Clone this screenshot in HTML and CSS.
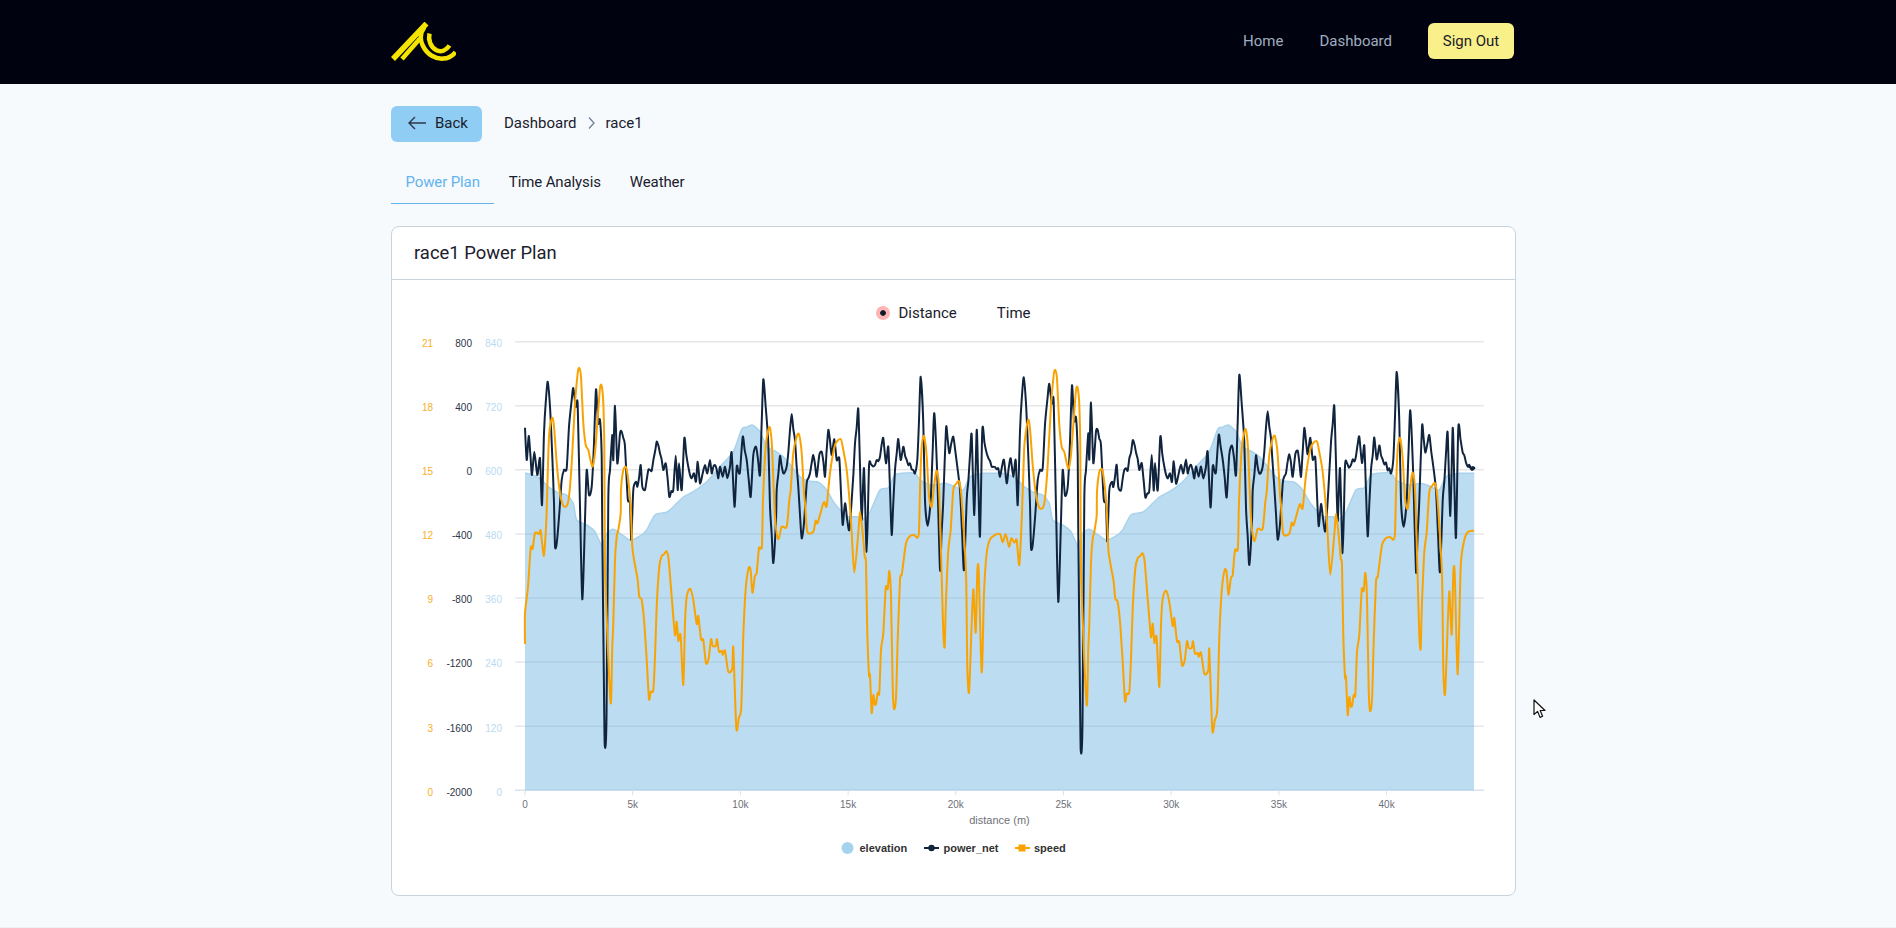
FILE: index.html

```html
<!DOCTYPE html>
<html lang="en">
<head>
  <meta charset="UTF-8">
  <title>race1 Power Plan</title>
  <link rel="stylesheet" href="styles.css">
</head>
<body>
  <header class="topbar">
    <div class="wrap topbar-inner">
      <svg class="logo" viewBox="390 21 66 40" width="66" height="40" fill="none" stroke="#f5e400">
        <path d="M426.5 22.5 L393 58" stroke-width="5.5"/>
        <path d="M420 37.5 L402 58" stroke-width="4.5"/>
        <path d="M424.5 26 C420.5 31 419.5 37 422.5 44 C427 54 436 58 443 57.6 C448 57.3 452.5 55 455.5 51" stroke-width="4.5"/>
        <path d="M429.5 32.5 C428 39 430.5 46 436.5 49.3 C441 51.5 446 49.5 449.5 44.5" stroke-width="4.5"/>
      </svg>
      <nav class="nav">
        <a class="nav-link">Home</a>
        <a class="nav-link">Dashboard</a>
        <button class="signout">Sign Out</button>
      </nav>
    </div>
  </header>

  <main class="wrap">
    <div class="toolbar">
      <button class="back">
        <svg width="18" height="14" viewBox="0 0 18 14" fill="none" stroke="#2d3748" stroke-width="1.4">
          <path d="M18 7 H1 M7 1 L1 7 L7 13"/>
        </svg>
        Back
      </button>
      <div class="crumbs">
        <span>Dashboard</span>
        <svg width="7" height="12" viewBox="0 0 7 12" fill="none" stroke="#718096" stroke-width="1.3">
          <path d="M1 0.5 L6 6 L1 11.5"/>
        </svg>
        <span>race1</span>
      </div>
    </div>

    <div class="tabs">
      <a class="tab tab-active">Power Plan</a>
      <a class="tab">Time Analysis</a>
      <a class="tab">Weather</a>
    </div>

    <section class="card">
      <h2 class="card-title">race1 Power Plan</h2>
      <div class="card-body">
        <div class="axis-switch">
          <span class="radio"></span>
          <span class="radio-label">Distance</span>
          <span class="radio-label">Time</span>
        </div>
        <svg id="chart" class="chart" viewBox="392 330 1122 560" width="1122" height="560"></svg>
      </div>
    </section>
  </main>

  <footer class="foot"></footer>

  <svg class="cursor" width="14" height="20" viewBox="0 0 14 20">
    <path d="M1 1 V15.5 L4.6 12.4 L7 18.4 L9.6 17.3 L7.2 11.5 H12 Z" fill="#fff" stroke="#111" stroke-width="1.2" stroke-linejoin="round"/>
  </svg>

  <script src="chart.js"></script>
</body>
</html>
```

FILE: styles.css

```css
* {
  box-sizing: border-box;
}
html, body {
  margin: 0;
  height: 100%;
}
body {
  display: flex;
  flex-direction: column;
  overflow: hidden;
  font-family: Roboto, "Noto Sans", sans-serif;
  font-size: 15px;
  color: #1a202c;
  background-color: #f6fafd;
}
.wrap {
  width: 1125px;
  margin-left: 391px;
}
.topbar {
  height: 84px;
  flex: none;
  background-color: #00020f;
}
.topbar-inner {
  height: 100%;
  display: flex;
  align-items: center;
  justify-content: space-between;
  padding: 0 2px 2px 0;
}
.logo {
  margin: 2px 0 0 -1px;
}
.nav {
  display: flex;
  align-items: center;
  gap: 36px;
}
.nav-link {
  color: #a0aec0;
  margin-top: -1px;
}
.signout {
  width: 86px;
  height: 36px;
  border: none;
  border-radius: 6px;
  font: inherit;
  color: #1a202c;
  background-color: #faf089;
}
main {
  flex: 1;
}
.toolbar {
  display: flex;
  align-items: center;
  gap: 22px;
  margin-top: 22px;
}
.back {
  display: flex;
  align-items: center;
  gap: 9px;
  width: 91px;
  height: 36px;
  padding: 0 0 2px 17px;
  border: none;
  border-radius: 6px;
  font: inherit;
  color: #1a202c;
  background-color: #90cdf4;
}
.crumbs {
  display: flex;
  align-items: center;
  gap: 11px;
  padding-bottom: 2px;
}
.tabs {
  display: flex;
  margin-top: 18px;
  letter-spacing: -0.12px;
}
.tab {
  padding: 13px 14.5px 0;
  height: 44px;
  line-height: 19px;
}
.tab-active {
  color: #63b3ed;
  border-bottom: 1px solid #63b3ed;
}
.card {
  margin-top: 22px;
  height: 670px;
  border: 1px solid #c9d3dc;
  border-radius: 8px;
  background-color: #fff;
}
.card-title {
  height: 53px;
  margin: 0;
  padding: 0 0 0 22px;
  font-size: 18.4px;
  font-weight: 400;
  line-height: 51px;
  border-bottom: 1px solid #c9d3dc;
}
.axis-switch {
  display: flex;
  align-items: center;
  justify-content: center;
  height: 24px;
  margin-top: 21px;
  gap: 8px;
}
.radio {
  width: 14px;
  height: 14px;
  border-radius: 50%;
  border: 4px solid #ffb3b3;
  background-color: #111827;
  background-clip: content-box;
}
.radio-label + .radio-label {
  margin-left: 32px;
}
.chart {
  display: block;
  margin-top: 5px;
}
.foot {
  height: 1px;
  flex: none;
  background-color: #edf2f7;
}
.cursor {
  position: absolute;
  left: 1533px;
  top: 699px;
}
.tick {
  font-family: "Liberation Sans", Arial, sans-serif;
  font-size: 10px;
}
.axis-name {
  font-family: "Liberation Sans", Arial, sans-serif;
  font-size: 11px;
  fill: #6e7079;
}
.legend-text {
  font-family: "Liberation Sans", Arial, sans-serif;
  font-size: 11px;
  font-weight: bold;
  fill: #333;
}
```

FILE: chart.js

```js
// traced race data, page pixel coordinates. the course is two laps, so lap 2 reuses lap 1
const LAP = 476;
const NAVY = "#10243e";
const ORANGE = "#f9a303";
const PLOT_L = 525, PLOT_R = 1474, PLOT_B = 790.3;

const elevLap = "525,473 533.3,475 541.7,480 548.3,486.7 553.3,490 558.3,492.7 566.7,495 573.3,503.3 576.7,520 586.7,525 595,531.7 601.7,545 606.7,533.3 613.3,529.3 620,533.3 630,540 640,536 646.7,530 655,515 666.7,512.3 673.3,506.7 683.3,497 693.3,491.7 706.7,481.7 720,466.7 733.3,451.7 741.7,429.3 746.7,427.3 752.3,425 760,431.7 766.7,446.7 775,451 783.3,456.7 791.7,466.7 800,476.7 808.3,481 818.3,482.3 826.7,490 833.3,501.7 841.7,511.7 848.3,516.7 856.7,516.7 865,518.3 870,512 880,490 888.3,487.7 895,475 901.7,473.3 915,473.3 920,480 931.7,485 945,483.3 955,486.7 963.3,490 970,476.7 983.3,473.3 998.3,473.3";

const powerHead = "525,427.7 526.7,460 528.7,436 532,475 534.3,451.7 537.3,475 540,458.3 542,505";
const powerLap = "544,433 545.7,403 547.7,381.7 550,406.7 552.3,456.7 554,503 555,546 556.7,543.3 559.3,513.3 561.7,480 564,470 566.7,468.3 569,426.7 571.7,400 573.3,388 575.7,406.7 577.7,405 580,506.7 582.3,599.3 585,520 586.7,470 589,495 591.7,486.7 594,443.3 596,389.3 598,423.3 600,420 601.7,456.7 602.3,533 604.3,718 605,748 606.5,718 608.3,500 610,470 612.3,435 613.3,460 615,405.7 617.3,463.3 620,433.3 621.7,431.7 625,446.7 627.7,498.3 630,503 631.3,540 633.3,490 636,481.7 637.3,486.7 640.7,465 642.3,486.7 645,490 648.3,470 651.7,470.7 656.7,441.7 660,453.3 663.3,470 665.7,463.3 669.3,496.7 673.3,490 675.7,455.7 677.7,490 679,463.3 681.7,490 684.3,438.3 688.3,466.7 691.7,478.3 694,473.3 696,481.7 697.7,461.7 700,483.3 702.7,473.3 705,465 707.3,473.3 710,460 711.7,473.3 715,465 718.3,478.3 720,466.7 722.7,476.7 725,466.7 727.3,478.3 730,466.7 731.7,453 734.5,506.7 736.7,466.7 740,471.7 742.7,436.7 746.7,460 750.7,496.7 753.3,455 756,446.7 760,475 763.3,379.3 765.7,406.7 768.3,443.3 770,506.7 773.3,563 776,520 776.7,490 780,456 783.3,473.3 786.7,466.7 791.7,414 795,440 798.3,486.7 801.7,538.3 804,523 806.7,483.3 810,473.3 813.3,455 816.7,476.7 819.3,455 821.7,451.7 825,476.7 828.3,430 831.7,455 834.3,439.3 836.7,460 839.3,458.3 842.7,525 845,503.3 849.3,530 851.7,500 855,443.3 858.3,409 861.7,520 864,468.3 866.7,551.7 869,466.7 875,465 880,456.7 883.3,438.3 886,463.3 888.3,446.7 891.7,535 895,470 898.3,439 900.7,460 903.3,446.7 906.7,460 915,473.3 917.3,460 920.7,376.7 923.3,423.3 925,500 927.7,525.7 930.7,500 934.3,413.3 937.3,476.7 940,570 943.3,500 946,428.3 949.3,453.3 953.3,436.7 957.3,466.7 960,490 964,570 966.7,500 971.7,435 974.3,515 976.7,430 980,536 982.3,430 986.7,453.3 991.7,466.7 998.3,468.3";
const powerJoin = "1000,476.7 1004,460 1006.7,483.3 1010.7,458.3 1013.3,476.7 1015.7,460 1017.7,505";
const powerTail = "1467.7,466.7 1472,470 1474,468.5";

const speedHead = "525,644 525,613 528,587 530.7,548 532.7,548.7 535,533 539,534 540.7,530.7 543.7,556 545.7,533 546.7,510";
const speedLap = "549,436.7 552.3,417.7 554.3,430 556.7,463 560,493 563.3,505.7 566.7,506 569,496.7 571.7,463 575,403 577.7,373 579.3,368 581,376.7 583.3,423 585.7,445 588.3,450 592.3,466.7 595,453 597.3,423 600,388 601.7,386 603.3,403 604.3,446.7 605,566.7 607.3,633 609.3,680 611,703 612.3,646.7 613.3,623 615,560 616.7,536.7 618.3,530 620.7,513 621,490 623.3,470 626,467.3 628.3,480 630.7,506.7 632.3,546.7 635,565 637.7,580 639.3,596.7 641.7,600 644.3,623 646.7,660 649,699 650.7,691.7 653.3,690 655,656.7 656.7,606.7 659.3,566.7 661.7,556 664,554.3 666.7,551.3 668.7,560 671.7,596.7 675,635 676.7,621.7 678.3,640.7 679.3,636 680.7,636.7 683.3,685 685,623.3 686.7,596.7 690,588.7 693.3,600 696.7,624 698.3,616 701,639.3 703.3,640 706,663.3 708.7,658.3 711,639.3 712.7,646 715.7,646 717,639.3 719,651.7 721.7,650.7 722.7,655 725,650.7 728.3,671.7 732.3,668.3 733.3,647.7 736.3,728 738.8,718 741.3,706.7 743.4,633 745.9,586.7 748.7,568 750.6,570 752.4,592.7 754.9,576 756.7,573 759,548 761.9,546.7 763,500 765.7,446.7 768.3,430 770,428 772,446.7 775,516.7 778.3,539 781.7,526.7 786.7,526.7 789.3,500 790.7,490 793.3,453 796.7,436.7 799,434.3 801.7,453 804,493 805,503 807.3,531.7 813.3,531.7 815.7,520.7 817.7,523 822.7,505 824.3,502 826.7,506 830,473 835,445 840.7,439 843.3,450 846.7,470 850,506.7 851.7,533 854.3,572.7 858.3,533 860,511.7 862.7,533 864.7,556.7 866,563 867.3,633 869,675 870,675 871.7,713 873.3,695 874.7,704 876,704 877.7,693 879.3,692.7 881,650 883.3,633 885.7,588 887.7,589 889.3,571 891,596.7 892.7,686.7 894,709 896,698 897.7,640 900,580 901.7,575 903.3,563 906,543 909.3,536.7 914,535 917.3,537.7 919,531.7 920,490 921.7,446.7 924,436 926.7,456.7 929,496.7 931.7,507 934,486.7 936.7,470.7 939.3,493.3 941.7,576.7 943.3,633 944.7,646.7 946,600 948.3,550 950.7,530 953.3,490 956,484 959.3,481.7 961.7,500 966,573 967.3,666.7 969,692.7 971,643 973.3,589.3 975.7,632.7 977.3,571.7 978.7,571.7 981.7,672.3";
const speedJoin = "984,593 986.7,553 990,539.3 995,535 1000,534 1002.7,542.3 1005.7,534.3 1009,546.7 1011.3,538.3 1014.3,542.7 1016.7,540 1019.3,565 1021.7,520 1024,453";
const speedTail = "1460.7,566.7 1464.3,540 1467.9,532 1474,530.7";

function parse(str) {
  return str.split(" ").map(p => p.split(",").map(Number));
}

function shift(pts, fy) {
  return pts.map(p => [p[0] + LAP, fy(p[1])]);
}

// smooth path through the points, like the chart lib does for smooth series
function smooth(pts) {
  let d = "M" + pts[0][0] + " " + pts[0][1];
  for (let i = 0; i < pts.length - 1; i++) {
    const p0 = pts[Math.max(i - 1, 0)];
    const p1 = pts[i];
    const p2 = pts[i + 1];
    const p3 = pts[Math.min(i + 2, pts.length - 1)];
    const c1x = p1[0] + (p2[0] - p0[0]) / 8;
    const c1y = p1[1] + (p2[1] - p0[1]) / 8;
    const c2x = p2[0] - (p3[0] - p1[0]) / 8;
    const c2y = p2[1] - (p3[1] - p1[1]) / 8;
    d += " C" + c1x.toFixed(1) + " " + c1y.toFixed(1) + " " + c2x.toFixed(1) + " " + c2y.toFixed(1) + " " + p2[0].toFixed(1) + " " + p2[1].toFixed(1);
  }
  return d;
}

// the power reading is noisy between the traced points
function roughen(pts) {
  const out = [];
  pts.forEach((p, i) => {
    out.push(p);
    const next = pts[i + 1];
    if (!next) return;
    const steps = Math.floor((next[0] - p[0]) / 1.6);
    for (let s = 1; s < steps; s++) {
      const t = s / steps;
      const wob = Math.sin(i * 12.9 + s * 78.2) * 2.6;
      out.push([p[0] + (next[0] - p[0]) * t, p[1] + (next[1] - p[1]) * t + wob]);
    }
  });
  return out;
}

const elevation = [...parse(elevLap), ...shift(parse(elevLap), y => y)];
const power = roughen([
  ...parse(powerHead), ...parse(powerLap), ...parse(powerJoin),
  ...shift(parse(powerLap), y => y < 470 ? y - (470 - y) * 0.05 : y + (y - 470) * 0.02),
  ...parse(powerTail)
]);
const speed = [
  ...parse(speedHead), ...parse(speedLap), ...parse(speedJoin),
  ...shift(parse(speedLap), y => y + 2),
  ...parse(speedTail)
];

const NS = "http://www.w3.org/2000/svg";
const chart = document.getElementById("chart");

function add(tag, attrs, text) {
  const el = document.createElementNS(NS, tag);
  for (const k in attrs) el.setAttribute(k, attrs[k]);
  if (text !== undefined) el.textContent = text;
  chart.appendChild(el);
  return el;
}

// grid and y axes
const yAxes = [
  { x: 433, color: "#f9ad2a", vals: [0, 3, 6, 9, 12, 15, 18, 21] },
  { x: 472, color: "#2b3648", vals: [-2000, -1600, -1200, -800, -400, 0, 400, 800] },
  { x: 502, color: "#b7dbf1", vals: [0, 120, 240, 360, 480, 600, 720, 840] }
];
for (let i = 0; i < 8; i++) {
  const y = PLOT_B - i * 64.09;
  add("line", {
    x1: 515, x2: 1484, y1: y, y2: y,
    stroke: i === 0 ? "#d9e2ee" : "#e6e7e8",
    "stroke-width": 1.5
  });
  yAxes.forEach(a => {
    add("text", { class: "tick", x: a.x, y: y + 5.3, "text-anchor": "end", fill: a.color }, a.vals[i]);
  });
}

// elevation area, see-through so the grid shows faintly
add("path", {
  d: smooth(elevation) + " L" + PLOT_R + " " + PLOT_B + " L" + PLOT_L + " " + PLOT_B + " Z",
  fill: "rgba(100,175,222,0.43)",
  stroke: "none"
});
add("path", { d: smooth(elevation), fill: "none", stroke: "#a9d3ec", "stroke-width": 1.5 });

// x axis
for (let k = 0; k <= 40; k += 5) {
  const x = PLOT_L + k * 21.54;
  add("line", { x1: x, x2: x, y1: PLOT_B, y2: PLOT_B + 5, stroke: "#d9e2ee", "stroke-width": 1 });
  add("text", { class: "tick", x: x, y: 807.5, "text-anchor": "middle", fill: "#6e7079" }, k === 0 ? "0" : k + "k");
}
add("text", { class: "axis-name", x: 999.5, y: 824, "text-anchor": "middle" }, "distance (m)");

// series
add("path", { d: smooth(power), fill: "none", stroke: NAVY, "stroke-width": 2, "stroke-linejoin": "round" });
add("path", { d: smooth(speed), fill: "none", stroke: ORANGE, "stroke-width": 2, "stroke-linejoin": "round" });

// legend
add("circle", { cx: 847.5, cy: 848, r: 6, fill: "#a5d3ee" });
add("text", { class: "legend-text", x: 859.5, y: 852 }, "elevation");
add("line", { x1: 924, x2: 939, y1: 848, y2: 848, stroke: NAVY, "stroke-width": 2 });
add("circle", { cx: 931.5, cy: 848, r: 3.2, fill: NAVY });
add("text", { class: "legend-text", x: 943.5, y: 852 }, "power_net");
add("line", { x1: 1015, x2: 1030, y1: 848, y2: 848, stroke: ORANGE, "stroke-width": 2 });
add("rect", { x: 1018.5, y: 844.5, width: 7, height: 7, fill: ORANGE });
add("text", { class: "legend-text", x: 1034, y: 852 }, "speed");
```
